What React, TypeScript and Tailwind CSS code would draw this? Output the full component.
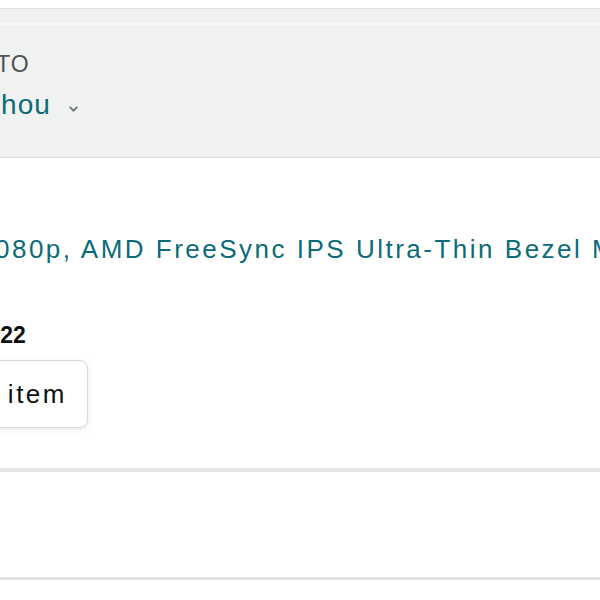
import React from 'react';

const font = { fontFamily: '"Liberation Sans", Arial, sans-serif' };

export default function App() {
  return (
    <div className="w-[600px] h-[600px] overflow-hidden bg-white text-[#0f1111]" style={font}>
      <div className="h-[8px]" />
      <div className="h-[150px] bg-[#f0f2f2] border-y border-[#dfe1e1] flex flex-col">
        <div className="h-[16px] border-b-2 border-[#f7f8f8]" />
        <div className="pt-[25px] whitespace-nowrap">
          <div className="-ml-[68px] text-[23px] leading-[28px] tracking-[1px] text-[#4f5353] uppercase">Ship to</div>
          <div className="-ml-[17px] mt-[12px] flex items-center text-[28px] leading-[30px] tracking-[1px] text-[#0b6b78]">
            <span>Zhou</span>
            <svg className="ml-[16px] mt-[6px] w-[13px] h-[13px]" viewBox="0 0 12 12" fill="none" stroke="#6f7373" strokeWidth="1.6">
              <path d="M2.5 4.5 6 8l3.5-3.5" />
            </svg>
          </div>
        </div>
      </div>
      <div className="pt-[76px] whitespace-nowrap">
        <div className="-ml-[22px] text-[26px] leading-[30px] tracking-[2.5px] text-[#0b6b78]">
          1080p, AMD FreeSync IPS Ultra-Thin Bezel Monitor
        </div>
        <div className="mt-[58px] -ml-[56px] text-[23px] leading-[26px] font-bold">$119.22</div>
        <div className="mt-[12px] -ml-[92px] w-[180px] h-[68px] rounded-lg border border-[#d5d9d9] bg-white shadow-[0_2px_5px_rgba(213,217,217,0.5)] flex items-center justify-end pr-[20px] text-[26px] tracking-[2.5px]">
          View item
        </div>
      </div>
      <div className="mt-[40px] h-[4px] bg-[#e3e4e4]" />
      <div className="h-[105px]" />
      <div className="h-[3px] bg-[#e3e4e4]" />
    </div>
  );
}
